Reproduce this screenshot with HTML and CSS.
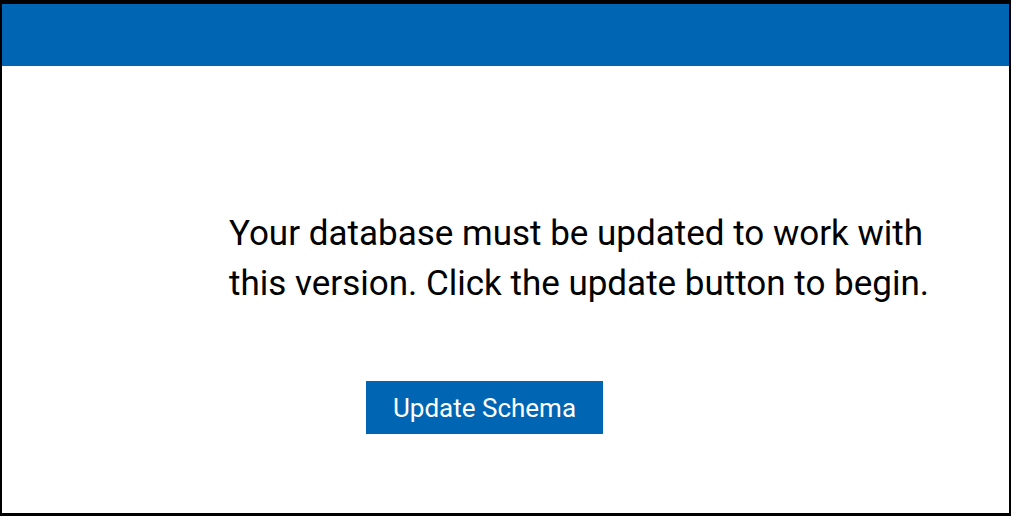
FILE: index.html
```html
<!DOCTYPE html>
<html>
<head>
<meta charset="utf-8">
<link rel="stylesheet" href="styles.css">
</head>
<body>
<div class="frame">
  <div class="header"></div>
  <div class="content">
    <p class="message">Your database must be updated to work with<br>this version. Click the update button to begin.</p>
    <button class="update-btn">Update Schema</button>
  </div>
</div>
</body>
</html>
```

FILE: styles.css
```css
html, body {
  margin: 0;
  padding: 0;
  background: #ffffff;
}
.frame {
  box-sizing: border-box;
  width: 1011px;
  height: 516px;
  border-style: solid;
  border-color: #000000;
  border-width: 4px 2px 3px 2px;
  display: flex;
  flex-direction: column;
  font-family: Roboto, "Liberation Sans", sans-serif;
}
.header {
  height: 62px;
  background: #0066b3;
  flex: none;
}
.content {
  padding: 143px 0 0 227px;
  display: flex;
  flex-direction: column;
  align-items: flex-start;
}
.message {
  margin: 0;
  font-size: 35px;
  line-height: 50px;
  color: #000000;
}
.update-btn {
  margin: 72px 0 0 137px;
  width: 237px;
  height: 53px;
  border: none;
  background: #0066b3;
  color: #ffffff;
  font-family: Roboto, "Liberation Sans", sans-serif;
  font-size: 26px;
  padding: 0;
}
```
